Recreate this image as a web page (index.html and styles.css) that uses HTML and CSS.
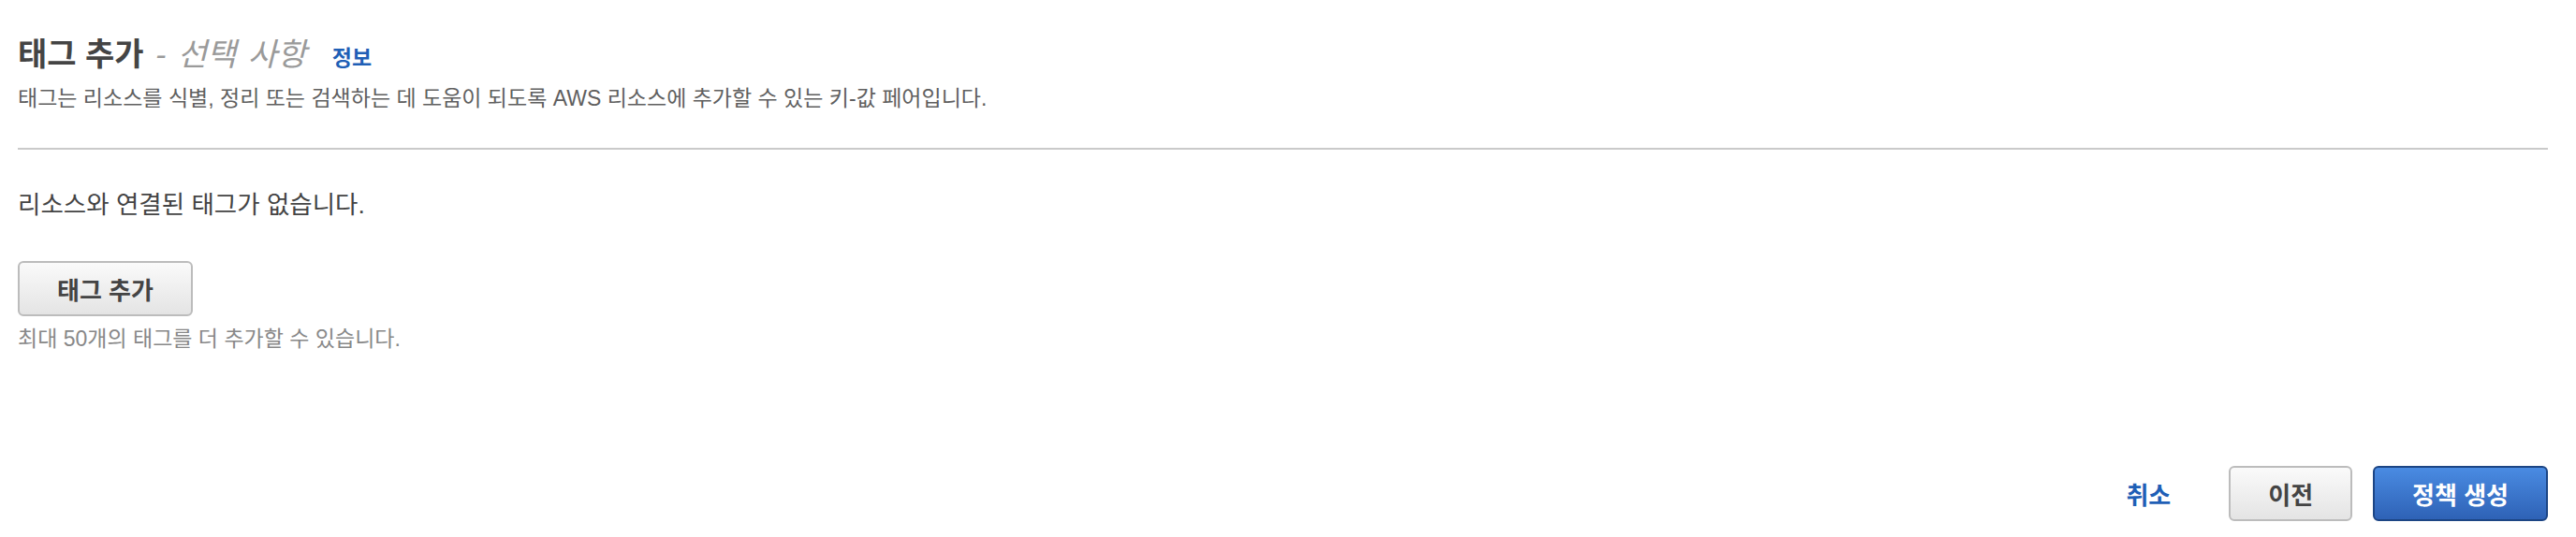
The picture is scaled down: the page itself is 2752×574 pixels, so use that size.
FILE: index.html
```html
<!DOCTYPE html>
<html lang="ko">
<head>
    <meta charset="UTF-8">
    <title>태그 추가</title>
    <link rel="stylesheet" href="styles.css">
</head>
<body>
    <div class="page">
        <!-- 태그 섹션 -->
        <div class="section-head">
            <h2 class="title">태그 추가 <span class="optional">- 선택 사항</span> <a href="#" class="info">정보</a></h2>
            <p class="desc">태그는 리소스를 식별, 정리 또는 검색하는 데 도움이 되도록 AWS 리소스에 추가할 수 있는 키-값 페어입니다.</p>
        </div>
        <hr class="divider">

        <p class="empty">리소스와 연결된 태그가 없습니다.</p>
        <button class="btn btn-add">태그 추가</button>
        <p class="hint">최대 50개의 태그를 더 추가할 수 있습니다.</p>

        <!-- 하단 버튼 -->
        <div class="footer">
            <a href="#" class="cancel">취소</a>
            <button class="btn">이전</button>
            <button class="btn btn-primary">정책 생성</button>
        </div>
    </div>
</body>
</html>
```

FILE: styles.css
```css
body {
    margin: 0;
    padding: 0;
    background: #fff;
    font-family: "Liberation Sans", "Noto Sans CJK KR", sans-serif;
    color: #444;
}

.page {
    padding: 0 30px 0 19px;
}

.section-head {
    padding-top: 36px;
}

.title {
    margin: 0;
    font-size: 34px;
    line-height: 44px;
    font-weight: bold;
    color: #444;
}

.optional {
    margin-left: 3px;
    font-weight: normal;
    font-style: italic;
    word-spacing: 3px;
    color: #9a9a9a;
}

.info {
    margin-left: 18px;
    font-size: 23px;
    font-style: normal;
    font-weight: bold;
    color: #1f5fb6;
    text-decoration: none;
}

.desc {
    margin: 5px 0 0;
    font-size: 23px;
    line-height: 32px;
    color: #5f5f5f;
}

.divider {
    margin: 37px 0 0;
    border: none;
    border-top: 2px solid #cacaca;
}

.empty {
    margin: 41px 0 0;
    font-size: 26.5px;
    line-height: 36px;
    color: #444;
}

.btn {
    display: block;
    height: 59px;
    padding: 0 40px;
    font-family: inherit;
    font-size: 26px;
    font-weight: bold;
    color: #444;
    background: linear-gradient(#fafafa, #e4e4e4);
    border: 2px solid #bcbcbc;
    border-radius: 6px;
    cursor: pointer;
}

.btn-add {
    margin-top: 42px;
}

.hint {
    margin: 8px 0 0;
    font-size: 23px;
    line-height: 32px;
    color: #888;
}

.footer {
    display: flex;
    justify-content: flex-end;
    align-items: center;
    gap: 22px;
    margin-top: 120px;
}

.cancel {
    margin-right: 40px;
    font-size: 26px;
    font-weight: bold;
    color: #1f5fb6;
    text-decoration: none;
}

.btn-primary {
    color: #fff;
    background: linear-gradient(#4a8be2, #2e62b6);
    border-color: #1c4584;
}
```
